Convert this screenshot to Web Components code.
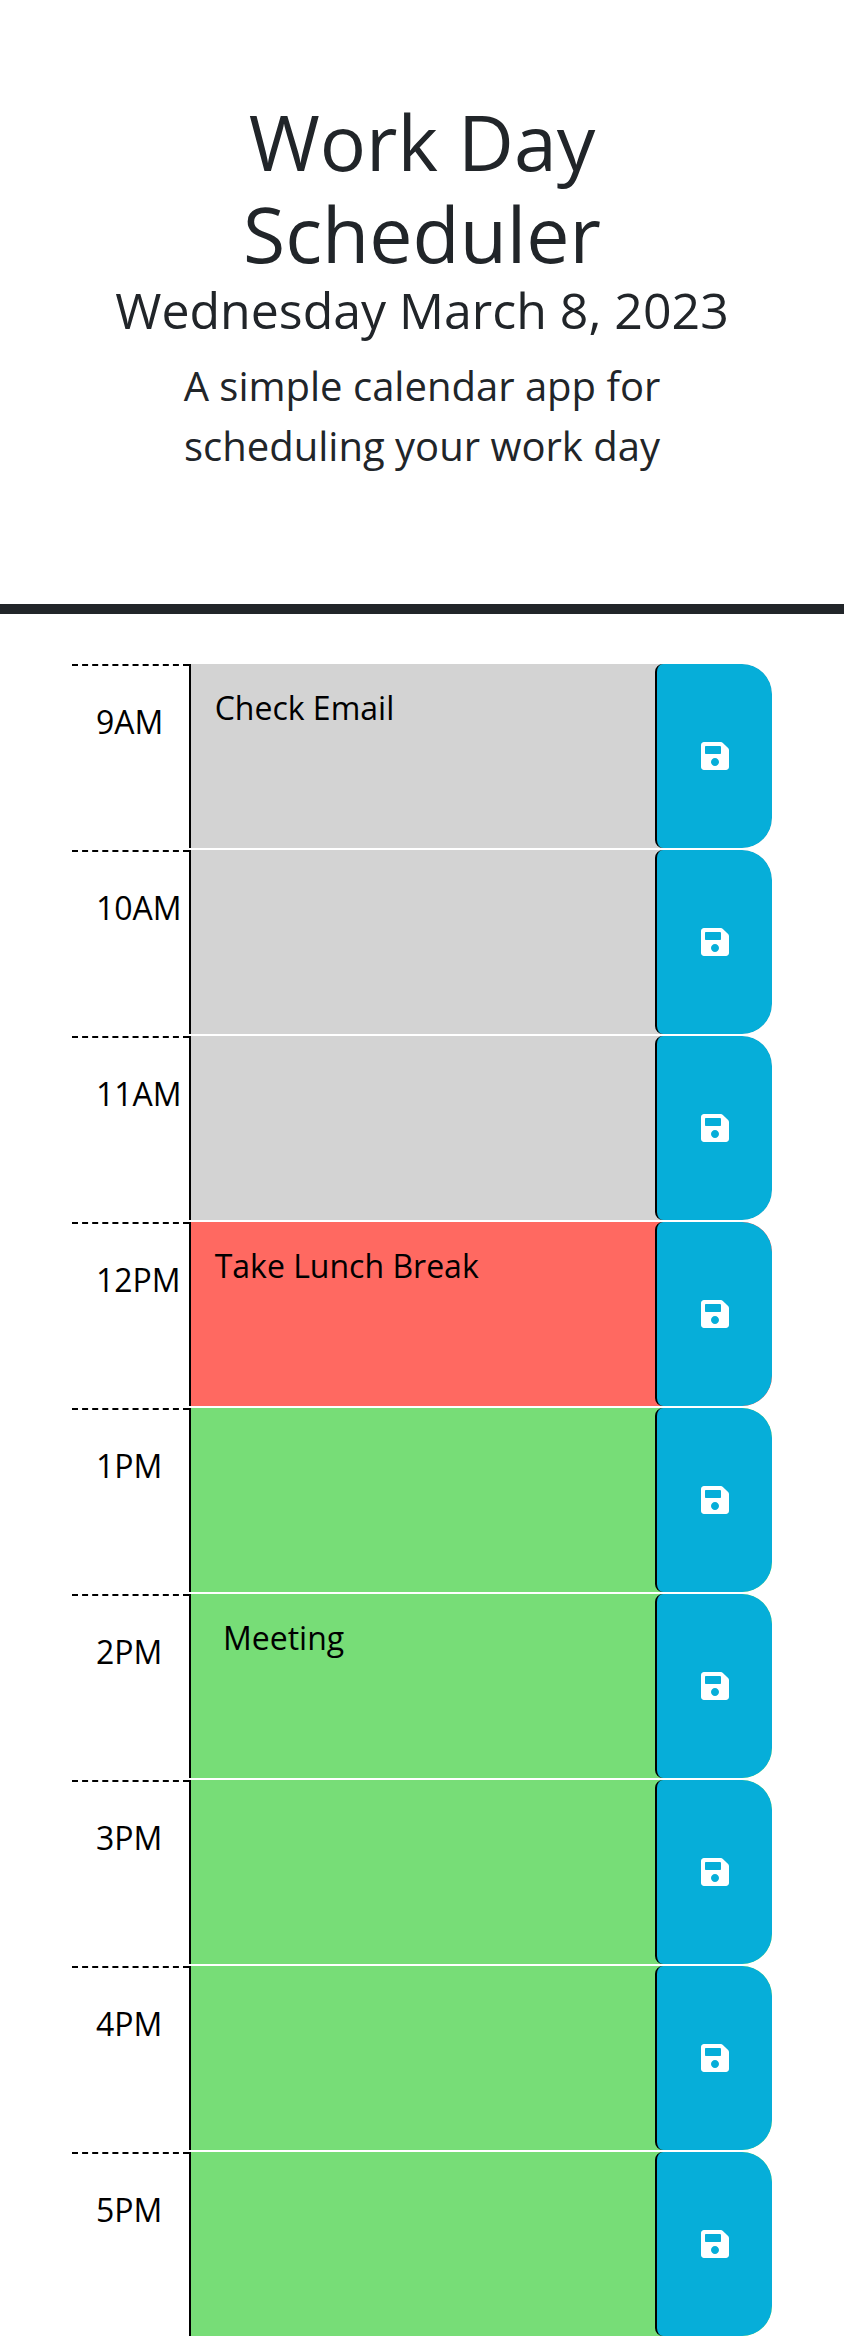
<!DOCTYPE html>
<html lang="en">
<head>
<meta charset="utf-8">
<meta name="viewport" content="width=device-width, initial-scale=1">
<title>Work Day Scheduler</title>
<style>
  body { margin: 0; background: #fff; color: #212529; font: 32px/48px "Open Sans", "Noto Sans", sans-serif; }
</style>
</head>
<body>
<day-header date="Wednesday March 8, 2023">
  <span slot="title">Work Day Scheduler</span>
  <span slot="lead">A simple calendar app for scheduling your work day</span>
</day-header>
<day-schedule>
  <time-block hour="9AM" when="past">Check Email</time-block>
  <time-block hour="10AM" when="past"></time-block>
  <time-block hour="11AM" when="past"></time-block>
  <time-block hour="12PM" when="present">Take Lunch Break</time-block>
  <time-block hour="1PM" when="future"></time-block>
  <time-block hour="2PM" when="future"> Meeting</time-block>
  <time-block hour="3PM" when="future"></time-block>
  <time-block hour="4PM" when="future"></time-block>
  <time-block hour="5PM" when="future"></time-block>
</day-schedule>

<template id="day-header">
  <style>
    :host { display: block; }
    header { padding: 96px 152px 128px; border-bottom: 10px solid #212529; text-align: center; }
    h1, p { margin: 0; font-weight: 400; }
    h1 { font-size: 77px; line-height: 92px; }
    .date { font-size: 50px; line-height: 60px; margin: 0 -48px 16px; }
    .lead { font-size: 40px; line-height: 60px; }
  </style>
  <header>
    <h1><slot name="title"></slot></h1>
    <p class="date"></p>
    <p class="lead"><slot name="lead"></slot></p>
  </header>
</template>

<template id="day-schedule">
  <style>
    :host { display: block; }
    main { display: flex; flex-direction: column; gap: 2px; padding: 50px 72px 0; }
  </style>
  <main><slot></slot></main>
</template>

<template id="time-block">
  <style>
    :host { display: block; color: #000; --slot-color: #d3d3d3; }
    :host([when="present"]) { --slot-color: #ff6961; }
    :host([when="future"]) { --slot-color: #77dd77; }
    .row { display: grid; grid-template-columns: 1fr 4fr 1fr; min-height: 184px; overflow: hidden;
      border-radius: 0 30px 30px 0; background: var(--slot-color); }
    label { box-sizing: border-box; padding: 32px 0 0 24px; background: #fff; border-top: 2px dashed #000; }
    textarea { box-sizing: border-box; width: 100%; height: 100%; margin: 0; padding: 20px 24px;
      border: 0; border-left: 2px solid #000; border-radius: 0; outline: 0; resize: none; overflow: auto;
      background: transparent; color: #000; font: inherit; }
    button { display: grid; place-items: center; margin: 0; padding: 0; border: 0; border-left: 2px solid #000;
      border-radius: 8px 30px 30px 8px; background: #06aed9; color: #fff; cursor: pointer; }
    button:hover { background: #0598ba; }
    svg { display: block; width: 28px; height: 32px; fill: currentColor; }
  </style>
  <div class="row">
    <label for="task"></label>
    <textarea id="task"></textarea>
    <button type="button" aria-label="Save">
      <svg viewBox="0 0 448 512" aria-hidden="true"><path d="M433.941 129.941l-83.882-83.882A48 48 0 0 0 316.118 32H48C21.49 32 0 53.49 0 80v352c0 26.51 21.49 48 48 48h352c26.51 0 48-21.49 48-48V163.882a48 48 0 0 0-14.059-33.941zM224 416c-35.346 0-64-28.654-64-64 0-35.346 28.654-64 64-64s64 28.654 64 64c0 35.346-28.654 64-64 64zm96-304.52V212c0 6.627-5.373 12-12 12H76c-6.627 0-12-5.373-12-12V108c0-6.627 5.373-12 12-12h228.52c3.183 0 6.235 1.264 8.485 3.515l3.48 3.48A11.996 11.996 0 0 1 320 111.48z"/></svg>
    </button>
  </div>
</template>

<script>
  class TemplateElement extends HTMLElement {
    constructor() {
      super();
      const template = document.getElementById(this.localName);
      this.attachShadow({ mode: "open" }).append(template.content.cloneNode(true));
    }
  }
  class DayHeader extends TemplateElement {
    connectedCallback() {
      this.shadowRoot.querySelector(".date").textContent = this.getAttribute("date");
    }
  }
  class DaySchedule extends TemplateElement {}
  class TimeBlock extends TemplateElement {
    connectedCallback() {
      this.shadowRoot.querySelector("label").textContent = this.getAttribute("hour");
      this.shadowRoot.querySelector("textarea").value = this.textContent;
    }
  }
  customElements.define("day-header", DayHeader);
  customElements.define("day-schedule", DaySchedule);
  customElements.define("time-block", TimeBlock);
</script>
</body>
</html>
